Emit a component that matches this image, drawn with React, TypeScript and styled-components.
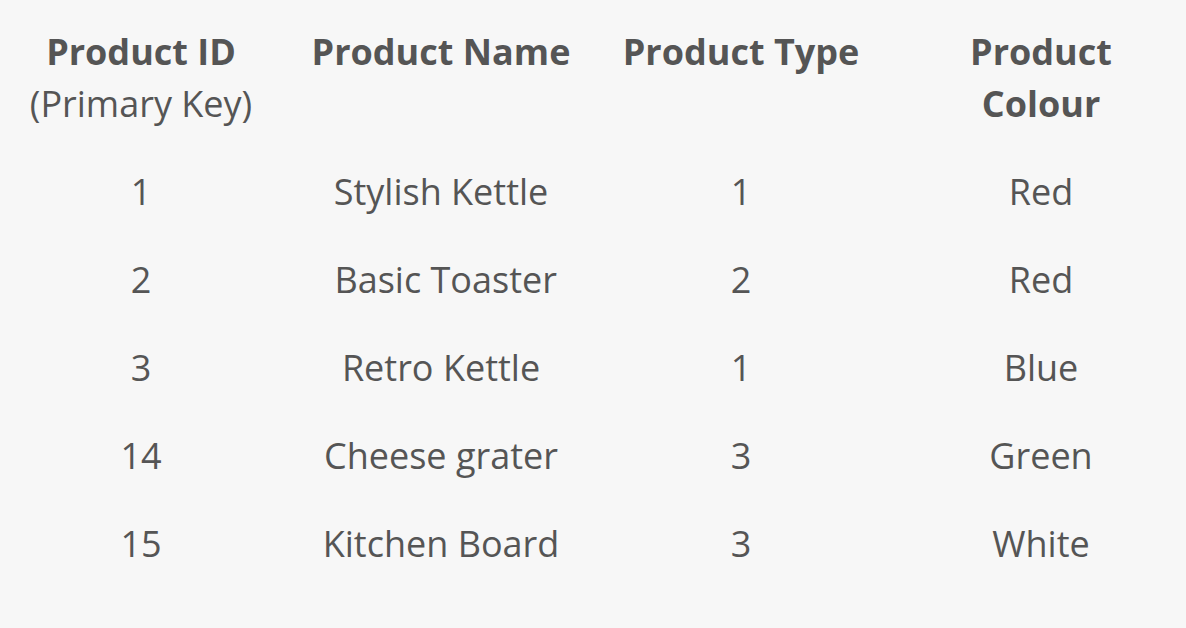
import React from "react";
import styled, { createGlobalStyle } from "styled-components";

const Global = createGlobalStyle`
  html, body { background: #f7f7f7; }
  body { margin: 8px; font-family: "Open Sans", "Liberation Sans", sans-serif; color: #555555; }
  *, *::before, *::after { box-sizing: border-box; }
`;

const Table = styled.table`
  border-collapse: collapse;
  margin-left: -17px;
  table-layout: fixed;
  width: 1200px;
`;

const Th = styled.th<{ $narrow?: boolean }>`
  width: 300px;
  padding: 18px ${(p) => (p.$narrow ? "40px" : "12px")};
  font-size: 36px;
  line-height: 52px;
  font-weight: 700;
  text-align: center;
  vertical-align: top;
`;

const Sub = styled.span`
  display: block;
  font-weight: 400;
  white-space: nowrap;
`;

const Td = styled.td`
  padding: 18px 12px;
  font-size: 36px;
  line-height: 52px;
  text-align: center;
`;

const rows: [string, string, string, string][] = [
  ["1", "Stylish Kettle", "1", "Red"],
  ["2", "\u00a0Basic Toaster", "2", "Red"],
  ["3", "Retro Kettle", "1", "Blue"],
  ["14", "Cheese grater", "3", "Green"],
  ["15", "Kitchen Board", "3", "White"],
];

export default function App() {
  return (
    <>
      <Global />
      <Table>
        <thead>
          <tr>
            <Th>
              Product ID
              <Sub>(Primary Key)</Sub>
            </Th>
            <Th>Product Name</Th>
            <Th>Product Type</Th>
            <Th $narrow>Product Colour</Th>
          </tr>
        </thead>
        <tbody>
          {rows.map((r) => (
            <tr key={r[0]}>
              {r.map((c, i) => (
                <Td key={i}>{c}</Td>
              ))}
            </tr>
          ))}
        </tbody>
      </Table>
    </>
  );
}
